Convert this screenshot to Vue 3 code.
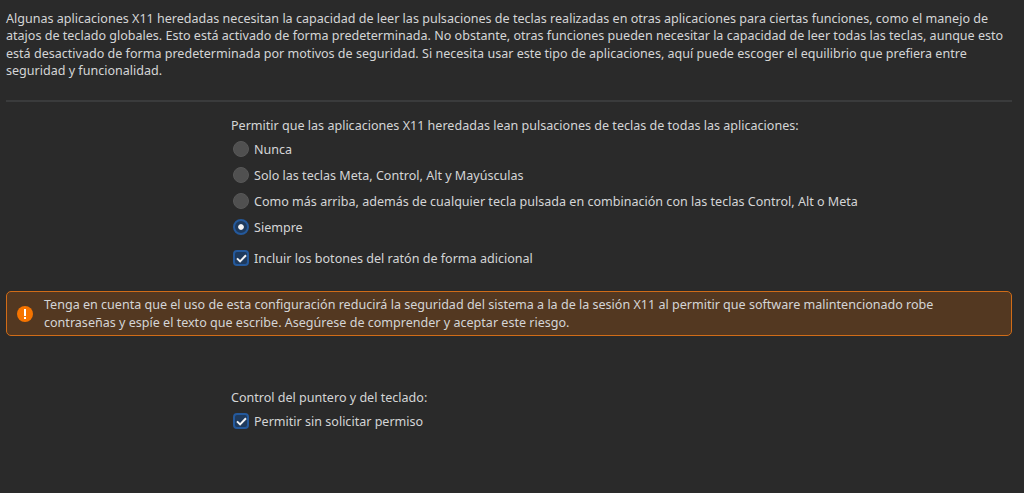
<script setup>
const radios = [
  { label: 'Nunca', on: false },
  { label: 'Solo las teclas Meta, Control, Alt y Mayúsculas', on: false },
  { label: 'Como más arriba, además de cualquier tecla pulsada en combinación con las teclas Control, Alt o Meta', on: false },
  { label: 'Siempre', on: true }
]
</script>

<template>
  <div class="page">
    <p class="intro">Algunas aplicaciones X11 heredadas necesitan la capacidad de leer las pulsaciones de teclas realizadas en otras aplicaciones para ciertas funciones, como el manejo de<br>atajos de teclado globales. Esto está activado de forma predeterminada. No obstante, otras funciones pueden necesitar la capacidad de leer todas las teclas, aunque esto<br>está desactivado de forma predeterminada por motivos de seguridad. Si necesita usar este tipo de aplicaciones, aquí puede escoger el equilibrio que prefiera entre<br>seguridad y funcionalidad.</p>
    <div class="sep"></div>
    <section class="form first">
      <div class="title">Permitir que las aplicaciones X11 heredadas lean pulsaciones de teclas de todas las aplicaciones:</div>
      <div v-for="r in radios" :key="r.label" class="row radio-row">
        <span class="radio" :class="{ on: r.on }"></span>
        <span>{{ r.label }}</span>
      </div>
      <div class="row check-row">
        <span class="check"><svg width="11" height="9" viewBox="0 0 11 9"><path d="M1 4.4 4.1 7.4 10 1.3" fill="none" stroke="#f4f5f6" stroke-width="2"/></svg></span>
        <span>Incluir los botones del ratón de forma adicional</span>
      </div>
    </section>
    <div class="warn">
      <svg class="warn-icon" width="16" height="16" viewBox="0 0 16 16"><circle cx="8" cy="8" r="8" fill="#f67400"/><rect x="7" y="3" width="2" height="7" fill="#fff"/><rect x="7" y="11" width="2" height="2" fill="#fff"/></svg>
      <p>Tenga en cuenta que el uso de esta configuración reducirá la seguridad del sistema a la de la sesión X11 al permitir que software malintencionado robe<br>contraseñas y espíe el texto que escribe. Asegúrese de comprender y aceptar este riesgo.</p>
    </div>
    <section class="form second">
      <div class="title">Control del puntero y del teclado:</div>
      <div class="row">
        <span class="check"><svg width="11" height="9" viewBox="0 0 11 9"><path d="M1 4.4 4.1 7.4 10 1.3" fill="none" stroke="#f4f5f6" stroke-width="2"/></svg></span>
        <span>Permitir sin solicitar permiso</span>
      </div>
    </section>
  </div>
</template>

<style>
html, body { margin: 0; background: #2a2a2a; }
</style>

<style scoped>
.page {
  box-sizing: border-box;
  width: 1024px;
  height: 493px;
  overflow: hidden;
  padding: 10px 12px 0 6px;
  background: #2a2a2a;
  color: #d4d5d6;
  font-family: "Noto Sans", sans-serif;
  font-size: 12.55px;
  line-height: 17.33px;
  white-space: nowrap;
}
.intro { margin: 0; }
.sep { height: 2px; background: #3a3b3c; margin: 21px 0 0; }
.form { padding-left: 225px; }
.first { margin-top: 15px; }
.title { height: 19px; }
.row { display: flex; align-items: center; gap: 5px; height: 26px; }
.check-row { margin-top: 5px; }
.radio {
  box-sizing: border-box;
  width: 16px;
  height: 16px;
  margin-left: 2px;
  border-radius: 50%;
  background: #505050;
  border: 1px solid #585858;
  flex: none;
}
.radio.on {
  background: radial-gradient(circle, #f4f5f6 0 2.4px, #1f3a5c 3.2px);
  border: 2px solid #24599c;
}
.check {
  box-sizing: border-box;
  width: 16px;
  height: 16px;
  margin-left: 2px;
  border-radius: 4px;
  background: #1f3a5c;
  border: 2px solid #24599c;
  display: flex;
  align-items: center;
  justify-content: center;
  flex: none;
}
.warn {
  box-sizing: border-box;
  height: 45px;
  margin-top: 20px;
  display: flex;
  align-items: center;
  gap: 11px;
  padding: 0 10px;
  background: #533821;
  border: 1px solid #d06c18;
  border-radius: 5px;
}
.warn p { margin: 0; }
.warn-icon { flex: none; }
.second { margin-top: 53px; }
</style>
